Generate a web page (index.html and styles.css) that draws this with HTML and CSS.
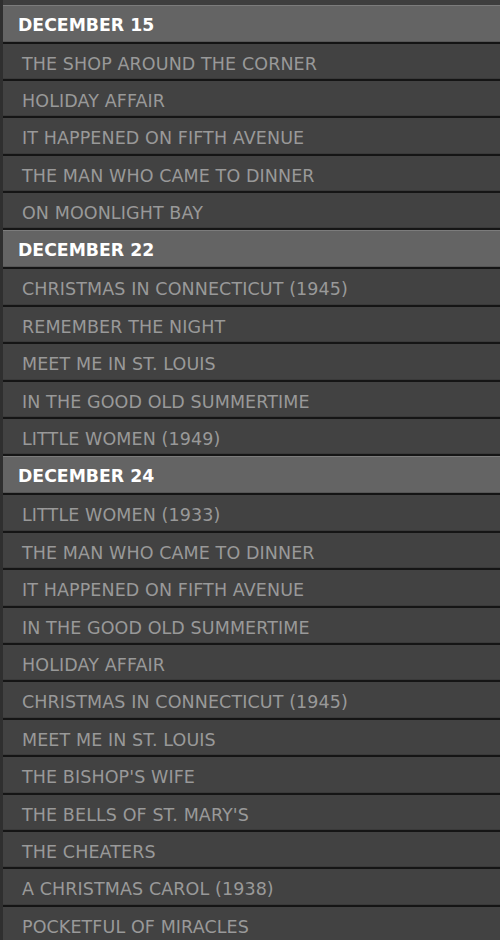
FILE: index.html
```html
<!DOCTYPE html>
<html>
<head>
<meta charset="utf-8">
<link rel="stylesheet" href="styles.css">
</head>
<body>
<div class="schedule">
  <section class="day">
    <h2 class="day-title">DECEMBER 15</h2>
    <ul class="films">
      <li class="film">THE SHOP AROUND THE CORNER</li>
      <li class="film">HOLIDAY AFFAIR</li>
      <li class="film">IT HAPPENED ON FIFTH AVENUE</li>
      <li class="film">THE MAN WHO CAME TO DINNER</li>
      <li class="film">ON MOONLIGHT BAY</li>
    </ul>
  </section>
  <section class="day">
    <h2 class="day-title">DECEMBER 22</h2>
    <ul class="films">
      <li class="film">CHRISTMAS IN CONNECTICUT (1945)</li>
      <li class="film">REMEMBER THE NIGHT</li>
      <li class="film">MEET ME IN ST. LOUIS</li>
      <li class="film">IN THE GOOD OLD SUMMERTIME</li>
      <li class="film">LITTLE WOMEN (1949)</li>
    </ul>
  </section>
  <section class="day">
    <h2 class="day-title">DECEMBER 24</h2>
    <ul class="films">
      <li class="film">LITTLE WOMEN (1933)</li>
      <li class="film">THE MAN WHO CAME TO DINNER</li>
      <li class="film">IT HAPPENED ON FIFTH AVENUE</li>
      <li class="film">IN THE GOOD OLD SUMMERTIME</li>
      <li class="film">HOLIDAY AFFAIR</li>
      <li class="film">CHRISTMAS IN CONNECTICUT (1945)</li>
      <li class="film">MEET ME IN ST. LOUIS</li>
      <li class="film">THE BISHOP'S WIFE</li>
      <li class="film">THE BELLS OF ST. MARY'S</li>
      <li class="film">THE CHEATERS</li>
      <li class="film">A CHRISTMAS CAROL (1938)</li>
      <li class="film">POCKETFUL OF MIRACLES</li>
    </ul>
  </section>
</div>
</body>
</html>
```
FILE: styles.css
```css
html, body {
  margin: 0;
  padding: 0;
  background: #2f2f2f;
  overflow: hidden;
}
.schedule {
  margin-left: 3px;
  padding-top: 4.5px;
  background: #3e3e3e;
  font-family: "DejaVu Sans", Verdana, sans-serif;
}
.day-title {
  margin: 0;
  height: 35px;
  padding-top: 1px;
  line-height: 37px;
  padding-left: 15px;
  font-size: 17.3px;
  font-weight: bold;
  color: #ffffff;
  background: #646464;
  border-top: 1px solid #7c7c7c;
  border-bottom: 2px solid #141414;
  box-shadow: inset 0 -1px 0 #555555;
}
.films {
  list-style: none;
  margin: 0;
  padding: 0;
}
.film {
  height: 32.4px;
  padding-top: 3px;
  line-height: 34px;
  padding-left: 19px;
  font-size: 17.5px;
  letter-spacing: 0.1px;
  color: #999999;
  background: #424242;
  border-bottom: 2px solid #151515;
  box-shadow: inset 0 -1px 0 #3a3a3a;
  white-space: nowrap;
}
```
